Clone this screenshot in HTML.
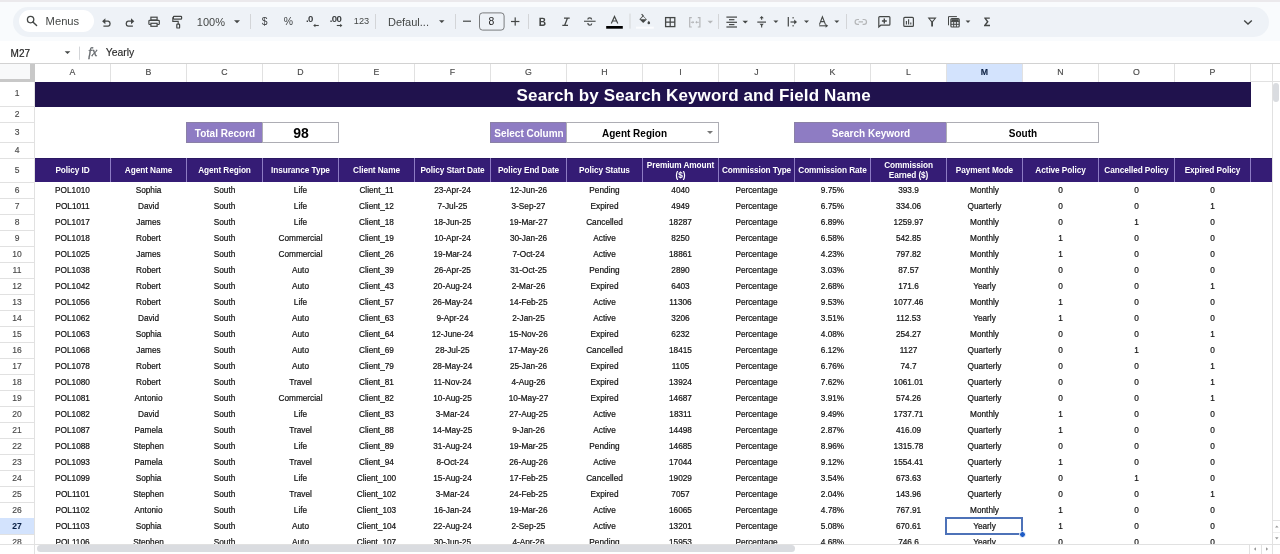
<!DOCTYPE html><html><head><meta charset="utf-8"><style>
*{margin:0;padding:0;box-sizing:border-box}
html,body{width:1280px;height:554px;overflow:hidden;background:#fff}
body{position:relative;will-change:transform;font-family:"Liberation Sans",sans-serif;color:#000}
.a{position:absolute}
.t{position:absolute;white-space:nowrap;text-align:center}
.d{position:absolute;white-space:nowrap;text-align:center;font-size:8.25px;color:#111;-webkit-text-stroke:0.2px #111;height:15px;line-height:15px;width:75px}
.rh{position:absolute;left:0;width:34px;text-align:center;font-size:8.5px;color:#4a4a4a;-webkit-text-stroke:0.15px #4a4a4a;white-space:nowrap}
.ch{position:absolute;top:64px;height:17px;line-height:17px;width:75px;text-align:center;font-size:8.75px;color:#4a4a4a;-webkit-text-stroke:0.15px #4a4a4a}
.hl{position:absolute;background:#e1e1e1}
.ic{position:absolute}
</style></head><body>
<div class="a" style="left:0;top:0;width:1280px;height:63px;background:#f9fbfd"></div>
<div class="a" style="left:0;top:0;width:1280px;height:2px;background:#ebe9ec"></div>
<div class="a" style="left:13px;top:7px;width:1256px;height:30px;border-radius:15px;background:#eef2f7"></div>
<div class="a" style="left:19px;top:10px;width:75px;height:22px;border-radius:11px;background:#fff"></div>
<div class="a" style="left:0;top:41px;width:1280px;height:22px;background:#fff"></div>
<div class="a" style="left:0;top:63px;width:1280px;height:1px;background:#d2d2d2"></div>
<svg class="a" style="left:0;top:0" width="1280" height="63" viewBox="0 0 1280 63"><circle cx="30.6" cy="19.6" r="3.2" fill="none" stroke="#444746" stroke-width="1.3"/><path d="M32.9 21.9L36.6 25.6" stroke="#444746" stroke-width="1.4" stroke-linecap="round"/><path d="M104.3 21.2H108.2A2.6 2.6 0 0 1 108.2 26.2H103.4" fill="none" stroke="#444746" stroke-width="1.3"/><path d="M102.1 21.2L105.4 18.2V24.2Z" fill="#444746"/><path d="M132.0 21.2H128.1A2.6 2.6 0 0 0 128.1 26.2H132.9" fill="none" stroke="#444746" stroke-width="1.3"/><path d="M134.3 21.2L131.0 18.2V24.2Z" fill="#444746"/><rect x="150.9" y="17.2" width="6.2" height="2.8" fill="none" stroke="#444746" stroke-width="1.2"/><rect x="148.9" y="20.3" width="10.4" height="4.2" rx="0.8" fill="none" stroke="#444746" stroke-width="1.2"/><rect x="150.9" y="23.3" width="6.2" height="3.0" fill="#eef2f7" stroke="#444746" stroke-width="1.2"/><rect x="173.4" y="16.4" width="8.2" height="2.8" rx="0.7" fill="none" stroke="#444746" stroke-width="1.2"/><path d="M173.4 17.8H172.8V21.4H178.2V24.2" fill="none" stroke="#444746" stroke-width="1.1"/><rect x="176.8" y="24.2" width="2.8" height="3.8" rx="0.6" fill="none" stroke="#444746" stroke-width="1.2"/><path d="M234 20.3L240 20.3L237.0 23.3Z" fill="#444746"/><rect x="250" y="14" width="1" height="15" fill="#d3d5d8"/><rect x="375" y="14" width="1" height="15" fill="#d3d5d8"/><path d="M439 20.3L444.5 20.3L441.75 23.05Z" fill="#444746"/><rect x="455" y="14" width="1" height="15" fill="#d3d5d8"/><rect x="463" y="20.6" width="8" height="1.2" fill="#444746"/><rect x="479.5" y="12.9" width="24.6" height="17.2" rx="3" fill="none" stroke="#7a7c7e" stroke-width="1"/><rect x="511" y="20.9" width="8.4" height="1.2" fill="#444746"/><rect x="514.6" y="17.4" width="1.2" height="8.2" fill="#444746"/><rect x="528" y="14" width="1" height="15" fill="#d3d5d8"/><path d="M539.4 17.8H542.9C544.5 17.8 545.2 18.7 545.2 19.8C545.2 20.8 544.6 21.4 543.9 21.6C544.9 21.8 545.6 22.6 545.6 23.7C545.6 25 544.7 25.9 543.1 25.9H539.4Z M541.0 19.1V21.0H542.7C543.3 21.0 543.7 20.6 543.7 20.05C543.7 19.5 543.3 19.1 542.7 19.1Z M541.0 22.3V24.6H542.9C543.6 24.6 544.0 24.1 544.0 23.45C544.0 22.8 543.6 22.3 542.9 22.3Z" fill="#444746" fill-rule="evenodd"/><path d="M564 18.2H569.7M562.3 25.4H568M567.4 18.2L564.6 25.4" stroke="#444746" stroke-width="1.3" fill="none"/><rect x="584" y="20.7" width="11.6" height="1.1" fill="#444746"/><path d="M591.6 19.5C591.6 18.4 590.7 17.8 589.7 17.8C588.6 17.8 587.8 18.5 587.8 19.4" fill="none" stroke="#444746" stroke-width="1.2"/><path d="M587.9 23.0C587.9 24.3 588.8 25.2 589.8 25.2C590.9 25.2 591.7 24.5 591.7 23.4" fill="none" stroke="#444746" stroke-width="1.2"/><path d="M611.3 23.4L614.5 16.5L617.8 23.4M612.5 21.0H616.5" fill="none" stroke="#444746" stroke-width="1.2"/><rect x="606.2" y="26" width="16.6" height="2.7" fill="#000"/><rect x="629.5" y="13.6" width="1" height="15.000000000000002" fill="#d3d5d8"/><path d="M641.6 14.2L643.4 16.0" stroke="#444746" stroke-width="1.1"/><path d="M643.0 15.6L646.8 19.4L643.2 23.0L639.4 19.2Z" fill="#444746"/><path d="M640.4 19.2L646.0 19.2L643.2 16.6Z" fill="#eef2f7"/><path d="M648.8 20.8C649.6 21.8 650.1 22.5 650.1 23.0A1.3 1.3 0 0 1 647.5 23.0C647.5 22.5 648.0 21.8 648.8 20.8Z" fill="#444746"/><rect x="636" y="26.7" width="17.8" height="2" fill="#fbfcfe"/><rect x="665.6" y="17.6" width="9.2" height="9" fill="none" stroke="#444746" stroke-width="1.3"/><path d="M670.2 17.6V26.6M665.6 22.1H674.8" stroke="#444746" stroke-width="1.2"/><path d="M691.8 17.6H689.7V27.0H691.8M697.8 17.6H699.9V27.0H697.8" fill="none" stroke="#b4b6b8" stroke-width="1.2"/><path d="M690.8 22.3H693.8M698.8 22.3H695.8" stroke="#b4b6b8" stroke-width="1"/><path d="M694.2 22.3L692.6 20.8V23.8Z M695.4 22.3L697.0 20.8V23.8Z" fill="#b4b6b8"/><path d="M707.5 20.7L713 20.7L710.25 23.45Z" fill="#b4b6b8"/><rect x="718" y="14" width="1" height="15" fill="#d3d5d8"/><rect x="726.4" y="16.5" width="10.600000000000023" height="1.2" fill="#444746"/><rect x="729" y="19.099999999999998" width="5.399999999999977" height="1.2" fill="#444746"/><rect x="726.4" y="21.7" width="10.600000000000023" height="1.2" fill="#444746"/><rect x="729" y="24.0" width="5.399999999999977" height="1.2" fill="#444746"/><rect x="726.4" y="26.4" width="10.600000000000023" height="1.2" fill="#444746"/><path d="M742.5 20.7L748 20.7L745.25 23.45Z" fill="#444746"/><rect x="757.3" y="21.5" width="8.7" height="1.2" fill="#444746"/><path d="M761.65 16.0L763.8 18.3H759.5Z M761.65 26.0L763.8 23.8H759.5Z" fill="#444746"/><path d="M761.65 17.5V19.8M761.65 24.3V27.6" stroke="#444746" stroke-width="1.1"/><path d="M773.4 20.5L778.4 20.5L775.9 23.0Z" fill="#444746"/><rect x="787.7" y="17" width="1.2" height="9.5" fill="#444746"/><path d="M790.5 22.0H795" stroke="#444746" stroke-width="1.2"/><path d="M797 22.0L794.2 19.6V24.4Z" fill="#444746"/><path d="M793.1 17V18.6M793.1 25V26.6" stroke="#444746" stroke-width="1.1"/><path d="M804 20.5L809 20.5L806.5 23.0Z" fill="#444746"/><path d="M819.4 24.6L822.4 16.8L825.5 24.6M820.6 21.6H824.4" fill="none" stroke="#444746" stroke-width="1.1"/><path d="M819.2 25.8H826.2" stroke="#444746" stroke-width="1.1"/><path d="M828.2 25.8L825.6 23.9V27.7Z" fill="#444746"/><path d="M834.3 20.5L839.3 20.5L836.8 23.0Z" fill="#444746"/><rect x="846" y="14" width="1" height="15" fill="#d3d5d8"/><path d="M859.0 19.5H857.5A2.4 2.4 0 0 0 857.5 24.3H859.0M862.6 19.5H864.1A2.4 2.4 0 0 1 864.1 24.3H862.6M858.6 21.9H863.0" fill="none" stroke="#b4b6b8" stroke-width="1.2"/><path d="M878.8 27.0V17.6A0.9 0.9 0 0 1 879.7 16.7H889.0A0.9 0.9 0 0 1 889.9 17.6V24.3A0.9 0.9 0 0 1 889.0 25.2H880.8Z" fill="none" stroke="#444746" stroke-width="1.2"/><path d="M884.3 18.5V23.4M881.9 20.95H886.8" stroke="#444746" stroke-width="1.4"/><rect x="903.8" y="17.3" width="9.6" height="9.1" rx="1" fill="none" stroke="#444746" stroke-width="1.2"/><path d="M906.4 21.0V24.6M908.6 19.3V24.6M910.8 22.6V24.6" stroke="#444746" stroke-width="1.1"/><path d="M927.6 17.5H936.6L933.0 21.9V26.5H931.2V21.9Z" fill="#444746"/><path d="M929.8 18.7H934.4L932.1 21.3Z" fill="#eef2f7"/><path d="M948.5 25.3V16.6H956.9" fill="none" stroke="#444746" stroke-width="1"/><rect x="950.9" y="18.6" width="8.3" height="8.4" rx="1" fill="none" stroke="#444746" stroke-width="1.2"/><path d="M950.9 21.6H959.2M950.9 24.3H959.2M953.7 21.6V27M956.4 21.6V27" stroke="#444746" stroke-width="1"/><rect x="951.5" y="19.2" width="7.1" height="2.4" fill="#444746"/><path d="M965.6 20.6L970.4 20.6L968.0 22.99999999999998Z" fill="#444746"/><path d="M984.2 17.4H989.8V18.7H986.3L988.6 21.7L986.3 24.8H990.0V26.2H984.0V25.2L986.8 21.7L984.2 18.3Z" fill="#444746"/><path d="M1244.2 20.4L1248.0 24.0L1251.8 20.4" fill="none" stroke="#444746" stroke-width="1.4"/><path d="M64.7 51.2L70.3 51.2L67.5 54.0Z" fill="#444746"/><rect x="79" y="46.6" width="1" height="13.199999999999996" fill="#d3d5d8"/></svg>
<div style="position:absolute;white-space:nowrap;font-family:'Liberation Sans',sans-serif;color:#444746;left:45.6px;top:10.92px;height:20px;line-height:20px;font-size:11.2px;">Menus</div>
<div style="position:absolute;white-space:nowrap;font-family:'Liberation Sans',sans-serif;color:#444746;left:196.8px;top:11.79px;height:20px;line-height:20px;font-size:11px;">100%</div>
<div style="position:absolute;white-space:nowrap;font-family:'Liberation Sans',sans-serif;color:#444746;left:261.8px;top:11.60px;height:20px;line-height:20px;font-size:10.4px;color:#3c3f41">$</div>
<div style="position:absolute;white-space:nowrap;font-family:'Liberation Sans',sans-serif;color:#444746;left:283.8px;top:11.60px;height:20px;line-height:20px;font-size:10.4px;color:#3c3f41">%</div>
<div style="position:absolute;white-space:nowrap;font-family:'Liberation Sans',sans-serif;color:#444746;left:306.0px;top:8.87px;height:20px;line-height:20px;font-size:9.6px;font-weight:bold;letter-spacing:-0.6px;color:#3c3f41">.0</div>
<div style="position:absolute;white-space:nowrap;font-family:'Liberation Sans',sans-serif;color:#444746;left:329.8px;top:8.87px;height:20px;line-height:20px;font-size:9.6px;font-weight:bold;letter-spacing:-0.6px;color:#3c3f41">.00</div>
<div style="position:absolute;white-space:nowrap;font-family:'Liberation Sans',sans-serif;color:#444746;left:353.8px;top:10.81px;height:20px;line-height:20px;font-size:9.2px;">123</div>
<div style="position:absolute;white-space:nowrap;font-family:'Liberation Sans',sans-serif;color:#444746;left:388px;top:11.59px;height:20px;line-height:20px;font-size:11px;">Defaul...</div>
<div style="position:absolute;white-space:nowrap;font-family:'Liberation Sans',sans-serif;color:#444746;left:488.6px;top:11.80px;height:20px;line-height:20px;font-size:10.4px;color:#1f1f1f">8</div>
<svg class="a" style="left:0;top:0" width="1280" height="40" viewBox="0 0 1280 40"><path d="M314.6 25.5H318.8" stroke="#444746" stroke-width="1.1"/><path d="M313.2 25.5L315.4 23.8V27.2Z" fill="#444746"/><path d="M336.8 25.5H341" stroke="#444746" stroke-width="1.1"/><path d="M342.4 25.5L340.2 23.8V27.2Z" fill="#444746"/></svg>
<div style="position:absolute;white-space:nowrap;font-family:'Liberation Sans',sans-serif;color:#444746;left:10.6px;top:43.54px;height:20px;line-height:20px;font-size:10px;color:#1f1f1f;-webkit-text-stroke:0.2px #1f1f1f">M27</div>
<div style="position:absolute;white-space:nowrap;font-family:'Liberation Sans',sans-serif;color:#444746;left:88.2px;top:41.87px;height:20px;line-height:20px;font-size:12.5px;font-family:'Liberation Serif',serif;color:#666a6e;letter-spacing:0.2px;-webkit-text-stroke:0.35px #666a6e"><i>fx</i></div>
<div style="position:absolute;white-space:nowrap;font-family:'Liberation Sans',sans-serif;color:#444746;left:105.8px;top:43.00px;height:20px;line-height:20px;font-size:10.4px;color:#2a2a2a;-webkit-text-stroke:0.15px #2a2a2a">Yearly</div>
<div class="ch" style="left:35px">A</div>
<div class="ch" style="left:111px">B</div>
<div class="ch" style="left:187px">C</div>
<div class="ch" style="left:263px">D</div>
<div class="ch" style="left:339px">E</div>
<div class="ch" style="left:415px">F</div>
<div class="ch" style="left:491px">G</div>
<div class="ch" style="left:567px">H</div>
<div class="ch" style="left:643px">I</div>
<div class="ch" style="left:719px">J</div>
<div class="ch" style="left:795px">K</div>
<div class="ch" style="left:871px">L</div>
<div class="a" style="left:947px;top:64px;width:75px;height:18px;background:#d3e3fd"></div>
<div class="ch" style="left:947px;font-weight:bold;color:#041e49">M</div>
<div class="ch" style="left:1023px">N</div>
<div class="ch" style="left:1099px">O</div>
<div class="ch" style="left:1175px">P</div>
<div class="hl" style="left:34px;top:64px;width:1px;height:18px"></div>
<div class="hl" style="left:110px;top:64px;width:1px;height:18px"></div>
<div class="hl" style="left:186px;top:64px;width:1px;height:18px"></div>
<div class="hl" style="left:262px;top:64px;width:1px;height:18px"></div>
<div class="hl" style="left:338px;top:64px;width:1px;height:18px"></div>
<div class="hl" style="left:414px;top:64px;width:1px;height:18px"></div>
<div class="hl" style="left:490px;top:64px;width:1px;height:18px"></div>
<div class="hl" style="left:566px;top:64px;width:1px;height:18px"></div>
<div class="hl" style="left:642px;top:64px;width:1px;height:18px"></div>
<div class="hl" style="left:718px;top:64px;width:1px;height:18px"></div>
<div class="hl" style="left:794px;top:64px;width:1px;height:18px"></div>
<div class="hl" style="left:870px;top:64px;width:1px;height:18px"></div>
<div class="hl" style="left:946px;top:64px;width:1px;height:18px"></div>
<div class="hl" style="left:1022px;top:64px;width:1px;height:18px"></div>
<div class="hl" style="left:1098px;top:64px;width:1px;height:18px"></div>
<div class="hl" style="left:1174px;top:64px;width:1px;height:18px"></div>
<div class="hl" style="left:1250px;top:64px;width:1px;height:18px"></div>
<div class="hl" style="left:1272px;top:64px;width:1px;height:490px"></div>
<div class="a" style="left:0;top:64px;width:34px;height:18px;background:#f8f9fa"></div>
<div class="a" style="left:30px;top:64px;width:5px;height:18px;background:#c8c8c8"></div>
<div class="a" style="left:0;top:79px;width:34px;height:3px;background:#c8c8c8"></div>
<div class="hl" style="left:34px;top:82px;width:1px;height:472px"></div>
<div class="rh" style="top:81px;height:24px;line-height:24px">1</div>
<div class="hl" style="left:0;top:106px;width:34px;height:1px"></div>
<div class="rh" style="top:107px;height:15px;line-height:15px">2</div>
<div class="hl" style="left:0;top:122px;width:34px;height:1px"></div>
<div class="rh" style="top:123px;height:19px;line-height:19px">3</div>
<div class="hl" style="left:0;top:142px;width:34px;height:1px"></div>
<div class="rh" style="top:143px;height:15px;line-height:15px">4</div>
<div class="hl" style="left:0;top:158px;width:34px;height:1px"></div>
<div class="rh" style="top:159px;height:23px;line-height:23px">5</div>
<div class="hl" style="left:0;top:182px;width:34px;height:1px"></div>
<div class="rh" style="top:183px;height:15px;line-height:15px">6</div>
<div class="hl" style="left:0;top:198px;width:34px;height:1px"></div>
<div class="rh" style="top:199px;height:15px;line-height:15px">7</div>
<div class="hl" style="left:0;top:214px;width:34px;height:1px"></div>
<div class="rh" style="top:215px;height:15px;line-height:15px">8</div>
<div class="hl" style="left:0;top:230px;width:34px;height:1px"></div>
<div class="rh" style="top:231px;height:15px;line-height:15px">9</div>
<div class="hl" style="left:0;top:246px;width:34px;height:1px"></div>
<div class="rh" style="top:247px;height:15px;line-height:15px">10</div>
<div class="hl" style="left:0;top:262px;width:34px;height:1px"></div>
<div class="rh" style="top:263px;height:15px;line-height:15px">11</div>
<div class="hl" style="left:0;top:278px;width:34px;height:1px"></div>
<div class="rh" style="top:279px;height:15px;line-height:15px">12</div>
<div class="hl" style="left:0;top:294px;width:34px;height:1px"></div>
<div class="rh" style="top:295px;height:15px;line-height:15px">13</div>
<div class="hl" style="left:0;top:310px;width:34px;height:1px"></div>
<div class="rh" style="top:311px;height:15px;line-height:15px">14</div>
<div class="hl" style="left:0;top:326px;width:34px;height:1px"></div>
<div class="rh" style="top:327px;height:15px;line-height:15px">15</div>
<div class="hl" style="left:0;top:342px;width:34px;height:1px"></div>
<div class="rh" style="top:343px;height:15px;line-height:15px">16</div>
<div class="hl" style="left:0;top:358px;width:34px;height:1px"></div>
<div class="rh" style="top:359px;height:15px;line-height:15px">17</div>
<div class="hl" style="left:0;top:374px;width:34px;height:1px"></div>
<div class="rh" style="top:375px;height:15px;line-height:15px">18</div>
<div class="hl" style="left:0;top:390px;width:34px;height:1px"></div>
<div class="rh" style="top:391px;height:15px;line-height:15px">19</div>
<div class="hl" style="left:0;top:406px;width:34px;height:1px"></div>
<div class="rh" style="top:407px;height:15px;line-height:15px">20</div>
<div class="hl" style="left:0;top:422px;width:34px;height:1px"></div>
<div class="rh" style="top:423px;height:15px;line-height:15px">21</div>
<div class="hl" style="left:0;top:438px;width:34px;height:1px"></div>
<div class="rh" style="top:439px;height:15px;line-height:15px">22</div>
<div class="hl" style="left:0;top:454px;width:34px;height:1px"></div>
<div class="rh" style="top:455px;height:15px;line-height:15px">23</div>
<div class="hl" style="left:0;top:470px;width:34px;height:1px"></div>
<div class="rh" style="top:471px;height:15px;line-height:15px">24</div>
<div class="hl" style="left:0;top:486px;width:34px;height:1px"></div>
<div class="rh" style="top:487px;height:15px;line-height:15px">25</div>
<div class="hl" style="left:0;top:502px;width:34px;height:1px"></div>
<div class="rh" style="top:503px;height:15px;line-height:15px">26</div>
<div class="hl" style="left:0;top:518px;width:34px;height:1px"></div>
<div class="a" style="left:0;top:518px;width:34px;height:17px;background:#d3e3fd"></div>
<div class="rh" style="top:519px;height:15px;line-height:15px;font-weight:bold;color:#041e49">27</div>
<div class="hl" style="left:0;top:534px;width:34px;height:1px"></div>
<div class="rh" style="top:535px;height:15px;line-height:15px">28</div>
<div class="hl" style="left:0;top:550px;width:34px;height:1px"></div>
<div class="a" style="left:35px;top:82px;width:1216px;height:25px;background:#20124d"></div>
<div class="t" style="left:516.6px;top:82.8px;height:25px;line-height:25px;font-size:17px;letter-spacing:0.12px;font-weight:bold;color:#fff;text-align:left">Search by Search Keyword and Field Name</div>
<div class="a" style="left:186px;top:122px;width:77px;height:21px;background:#8e7cc3;border:1px solid #8a80a6;border-right:none"></div>
<div class="t" style="left:187px;top:123.2px;width:76px;height:21px;line-height:21px;font-size:10px;font-weight:bold;color:#fff">Total Record</div>
<div class="a" style="left:262px;top:122px;width:77px;height:21px;border:1px solid #adadb4;background:#fff"></div>
<div class="t" style="left:263px;top:122.5px;width:76px;height:21px;line-height:21px;font-size:14px;font-weight:bold;color:#000">98</div>
<div class="a" style="left:490px;top:122px;width:77px;height:21px;background:#8e7cc3;border:1px solid #8a80a6;border-right:none"></div>
<div class="t" style="left:491px;top:123.2px;width:76px;height:21px;line-height:21px;font-size:10px;font-weight:bold;color:#fff">Select Column</div>
<div class="a" style="left:566px;top:122px;width:153px;height:21px;border:1px solid #adadb4;background:#fff"></div>
<div class="t" style="left:566px;top:122.5px;width:137px;height:21px;line-height:21px;font-size:10px;font-weight:bold;color:#000">Agent Region</div>
<div class="a" style="left:707px;top:131px;width:0;height:0;border-left:3px solid transparent;border-right:3px solid transparent;border-top:3px solid #777"></div>
<div class="a" style="left:794px;top:122px;width:153px;height:21px;background:#8e7cc3;border:1px solid #8a80a6;border-right:none"></div>
<div class="t" style="left:795px;top:123.2px;width:152px;height:21px;line-height:21px;font-size:10px;font-weight:bold;color:#fff">Search Keyword</div>
<div class="a" style="left:946px;top:122px;width:153px;height:21px;border:1px solid #adadb4;background:#fff"></div>
<div class="t" style="left:947px;top:122.5px;width:152px;height:21px;line-height:21px;font-size:10px;font-weight:bold;color:#000">South</div>
<div class="a" style="left:35px;top:158px;width:1237px;height:24px;background:#351c75;border-top:1px solid #2a1862"></div>
<div class="a" style="left:110px;top:158px;width:1px;height:24px;background:#8e7cc3"></div>
<div class="a" style="left:186px;top:158px;width:1px;height:24px;background:#8e7cc3"></div>
<div class="a" style="left:262px;top:158px;width:1px;height:24px;background:#8e7cc3"></div>
<div class="a" style="left:338px;top:158px;width:1px;height:24px;background:#8e7cc3"></div>
<div class="a" style="left:414px;top:158px;width:1px;height:24px;background:#8e7cc3"></div>
<div class="a" style="left:490px;top:158px;width:1px;height:24px;background:#8e7cc3"></div>
<div class="a" style="left:566px;top:158px;width:1px;height:24px;background:#8e7cc3"></div>
<div class="a" style="left:642px;top:158px;width:1px;height:24px;background:#8e7cc3"></div>
<div class="a" style="left:718px;top:158px;width:1px;height:24px;background:#8e7cc3"></div>
<div class="a" style="left:794px;top:158px;width:1px;height:24px;background:#8e7cc3"></div>
<div class="a" style="left:870px;top:158px;width:1px;height:24px;background:#8e7cc3"></div>
<div class="a" style="left:946px;top:158px;width:1px;height:24px;background:#8e7cc3"></div>
<div class="a" style="left:1022px;top:158px;width:1px;height:24px;background:#8e7cc3"></div>
<div class="a" style="left:1098px;top:158px;width:1px;height:24px;background:#8e7cc3"></div>
<div class="a" style="left:1174px;top:158px;width:1px;height:24px;background:#8e7cc3"></div>
<div class="a" style="left:1250px;top:158px;width:1px;height:24px;background:#8e7cc3"></div>
<div class="t" style="left:35px;top:158.5px;width:75px;height:23px;line-height:23px;font-size:8.25px;letter-spacing:-0.08px;font-weight:bold;color:#fff">Policy ID</div>
<div class="t" style="left:111px;top:158.5px;width:75px;height:23px;line-height:23px;font-size:8.25px;letter-spacing:-0.08px;font-weight:bold;color:#fff">Agent Name</div>
<div class="t" style="left:187px;top:158.5px;width:75px;height:23px;line-height:23px;font-size:8.25px;letter-spacing:-0.08px;font-weight:bold;color:#fff">Agent Region</div>
<div class="t" style="left:263px;top:158.5px;width:75px;height:23px;line-height:23px;font-size:8.25px;letter-spacing:-0.08px;font-weight:bold;color:#fff">Insurance Type</div>
<div class="t" style="left:339px;top:158.5px;width:75px;height:23px;line-height:23px;font-size:8.25px;letter-spacing:-0.08px;font-weight:bold;color:#fff">Client Name</div>
<div class="t" style="left:415px;top:158.5px;width:75px;height:23px;line-height:23px;font-size:8.25px;letter-spacing:-0.08px;font-weight:bold;color:#fff">Policy Start Date</div>
<div class="t" style="left:491px;top:158.5px;width:75px;height:23px;line-height:23px;font-size:8.25px;letter-spacing:-0.08px;font-weight:bold;color:#fff">Policy End Date</div>
<div class="t" style="left:567px;top:158.5px;width:75px;height:23px;line-height:23px;font-size:8.25px;letter-spacing:-0.08px;font-weight:bold;color:#fff">Policy Status</div>
<div class="t" style="left:643px;top:161px;width:75px;height:20px;line-height:9.5px;font-size:8.25px;letter-spacing:-0.08px;font-weight:bold;color:#fff;white-space:normal">Premium Amount<br>($)</div>
<div class="t" style="left:719px;top:158.5px;width:75px;height:23px;line-height:23px;font-size:8.25px;letter-spacing:-0.08px;font-weight:bold;color:#fff">Commission Type</div>
<div class="t" style="left:795px;top:158.5px;width:75px;height:23px;line-height:23px;font-size:8.25px;letter-spacing:-0.08px;font-weight:bold;color:#fff">Commission Rate</div>
<div class="t" style="left:871px;top:161px;width:75px;height:20px;line-height:9.5px;font-size:8.25px;letter-spacing:-0.08px;font-weight:bold;color:#fff;white-space:normal">Commission<br>Earned ($)</div>
<div class="t" style="left:947px;top:158.5px;width:75px;height:23px;line-height:23px;font-size:8.25px;letter-spacing:-0.08px;font-weight:bold;color:#fff">Payment Mode</div>
<div class="t" style="left:1023px;top:158.5px;width:75px;height:23px;line-height:23px;font-size:8.25px;letter-spacing:-0.08px;font-weight:bold;color:#fff">Active Policy</div>
<div class="t" style="left:1099px;top:158.5px;width:75px;height:23px;line-height:23px;font-size:8.25px;letter-spacing:-0.08px;font-weight:bold;color:#fff">Cancelled Policy</div>
<div class="t" style="left:1175px;top:158.5px;width:75px;height:23px;line-height:23px;font-size:8.25px;letter-spacing:-0.08px;font-weight:bold;color:#fff">Expired Policy</div>
<div class="d" style="left:35px;top:183px">POL1010</div>
<div class="d" style="left:111px;top:183px">Sophia</div>
<div class="d" style="left:187px;top:183px">South</div>
<div class="d" style="left:263px;top:183px">Life</div>
<div class="d" style="left:339px;top:183px">Client_11</div>
<div class="d" style="left:415px;top:183px">23-Apr-24</div>
<div class="d" style="left:491px;top:183px">12-Jun-26</div>
<div class="d" style="left:567px;top:183px">Pending</div>
<div class="d" style="left:643px;top:183px">4040</div>
<div class="d" style="left:719px;top:183px">Percentage</div>
<div class="d" style="left:795px;top:183px">9.75%</div>
<div class="d" style="left:871px;top:183px">393.9</div>
<div class="d" style="left:947px;top:183px">Monthly</div>
<div class="d" style="left:1023px;top:183px">0</div>
<div class="d" style="left:1099px;top:183px">0</div>
<div class="d" style="left:1175px;top:183px">0</div>
<div class="d" style="left:35px;top:199px">POL1011</div>
<div class="d" style="left:111px;top:199px">David</div>
<div class="d" style="left:187px;top:199px">South</div>
<div class="d" style="left:263px;top:199px">Life</div>
<div class="d" style="left:339px;top:199px">Client_12</div>
<div class="d" style="left:415px;top:199px">7-Jul-25</div>
<div class="d" style="left:491px;top:199px">3-Sep-27</div>
<div class="d" style="left:567px;top:199px">Expired</div>
<div class="d" style="left:643px;top:199px">4949</div>
<div class="d" style="left:719px;top:199px">Percentage</div>
<div class="d" style="left:795px;top:199px">6.75%</div>
<div class="d" style="left:871px;top:199px">334.06</div>
<div class="d" style="left:947px;top:199px">Quarterly</div>
<div class="d" style="left:1023px;top:199px">0</div>
<div class="d" style="left:1099px;top:199px">0</div>
<div class="d" style="left:1175px;top:199px">1</div>
<div class="d" style="left:35px;top:215px">POL1017</div>
<div class="d" style="left:111px;top:215px">James</div>
<div class="d" style="left:187px;top:215px">South</div>
<div class="d" style="left:263px;top:215px">Life</div>
<div class="d" style="left:339px;top:215px">Client_18</div>
<div class="d" style="left:415px;top:215px">18-Jun-25</div>
<div class="d" style="left:491px;top:215px">19-Mar-27</div>
<div class="d" style="left:567px;top:215px">Cancelled</div>
<div class="d" style="left:643px;top:215px">18287</div>
<div class="d" style="left:719px;top:215px">Percentage</div>
<div class="d" style="left:795px;top:215px">6.89%</div>
<div class="d" style="left:871px;top:215px">1259.97</div>
<div class="d" style="left:947px;top:215px">Monthly</div>
<div class="d" style="left:1023px;top:215px">0</div>
<div class="d" style="left:1099px;top:215px">1</div>
<div class="d" style="left:1175px;top:215px">0</div>
<div class="d" style="left:35px;top:231px">POL1018</div>
<div class="d" style="left:111px;top:231px">Robert</div>
<div class="d" style="left:187px;top:231px">South</div>
<div class="d" style="left:263px;top:231px">Commercial</div>
<div class="d" style="left:339px;top:231px">Client_19</div>
<div class="d" style="left:415px;top:231px">10-Apr-24</div>
<div class="d" style="left:491px;top:231px">30-Jan-26</div>
<div class="d" style="left:567px;top:231px">Active</div>
<div class="d" style="left:643px;top:231px">8250</div>
<div class="d" style="left:719px;top:231px">Percentage</div>
<div class="d" style="left:795px;top:231px">6.58%</div>
<div class="d" style="left:871px;top:231px">542.85</div>
<div class="d" style="left:947px;top:231px">Monthly</div>
<div class="d" style="left:1023px;top:231px">1</div>
<div class="d" style="left:1099px;top:231px">0</div>
<div class="d" style="left:1175px;top:231px">0</div>
<div class="d" style="left:35px;top:247px">POL1025</div>
<div class="d" style="left:111px;top:247px">James</div>
<div class="d" style="left:187px;top:247px">South</div>
<div class="d" style="left:263px;top:247px">Commercial</div>
<div class="d" style="left:339px;top:247px">Client_26</div>
<div class="d" style="left:415px;top:247px">19-Mar-24</div>
<div class="d" style="left:491px;top:247px">7-Oct-24</div>
<div class="d" style="left:567px;top:247px">Active</div>
<div class="d" style="left:643px;top:247px">18861</div>
<div class="d" style="left:719px;top:247px">Percentage</div>
<div class="d" style="left:795px;top:247px">4.23%</div>
<div class="d" style="left:871px;top:247px">797.82</div>
<div class="d" style="left:947px;top:247px">Monthly</div>
<div class="d" style="left:1023px;top:247px">1</div>
<div class="d" style="left:1099px;top:247px">0</div>
<div class="d" style="left:1175px;top:247px">0</div>
<div class="d" style="left:35px;top:263px">POL1038</div>
<div class="d" style="left:111px;top:263px">Robert</div>
<div class="d" style="left:187px;top:263px">South</div>
<div class="d" style="left:263px;top:263px">Auto</div>
<div class="d" style="left:339px;top:263px">Client_39</div>
<div class="d" style="left:415px;top:263px">26-Apr-25</div>
<div class="d" style="left:491px;top:263px">31-Oct-25</div>
<div class="d" style="left:567px;top:263px">Pending</div>
<div class="d" style="left:643px;top:263px">2890</div>
<div class="d" style="left:719px;top:263px">Percentage</div>
<div class="d" style="left:795px;top:263px">3.03%</div>
<div class="d" style="left:871px;top:263px">87.57</div>
<div class="d" style="left:947px;top:263px">Monthly</div>
<div class="d" style="left:1023px;top:263px">0</div>
<div class="d" style="left:1099px;top:263px">0</div>
<div class="d" style="left:1175px;top:263px">0</div>
<div class="d" style="left:35px;top:279px">POL1042</div>
<div class="d" style="left:111px;top:279px">Robert</div>
<div class="d" style="left:187px;top:279px">South</div>
<div class="d" style="left:263px;top:279px">Auto</div>
<div class="d" style="left:339px;top:279px">Client_43</div>
<div class="d" style="left:415px;top:279px">20-Aug-24</div>
<div class="d" style="left:491px;top:279px">2-Mar-26</div>
<div class="d" style="left:567px;top:279px">Expired</div>
<div class="d" style="left:643px;top:279px">6403</div>
<div class="d" style="left:719px;top:279px">Percentage</div>
<div class="d" style="left:795px;top:279px">2.68%</div>
<div class="d" style="left:871px;top:279px">171.6</div>
<div class="d" style="left:947px;top:279px">Yearly</div>
<div class="d" style="left:1023px;top:279px">0</div>
<div class="d" style="left:1099px;top:279px">0</div>
<div class="d" style="left:1175px;top:279px">1</div>
<div class="d" style="left:35px;top:295px">POL1056</div>
<div class="d" style="left:111px;top:295px">Robert</div>
<div class="d" style="left:187px;top:295px">South</div>
<div class="d" style="left:263px;top:295px">Life</div>
<div class="d" style="left:339px;top:295px">Client_57</div>
<div class="d" style="left:415px;top:295px">26-May-24</div>
<div class="d" style="left:491px;top:295px">14-Feb-25</div>
<div class="d" style="left:567px;top:295px">Active</div>
<div class="d" style="left:643px;top:295px">11306</div>
<div class="d" style="left:719px;top:295px">Percentage</div>
<div class="d" style="left:795px;top:295px">9.53%</div>
<div class="d" style="left:871px;top:295px">1077.46</div>
<div class="d" style="left:947px;top:295px">Monthly</div>
<div class="d" style="left:1023px;top:295px">1</div>
<div class="d" style="left:1099px;top:295px">0</div>
<div class="d" style="left:1175px;top:295px">0</div>
<div class="d" style="left:35px;top:311px">POL1062</div>
<div class="d" style="left:111px;top:311px">David</div>
<div class="d" style="left:187px;top:311px">South</div>
<div class="d" style="left:263px;top:311px">Auto</div>
<div class="d" style="left:339px;top:311px">Client_63</div>
<div class="d" style="left:415px;top:311px">9-Apr-24</div>
<div class="d" style="left:491px;top:311px">2-Jan-25</div>
<div class="d" style="left:567px;top:311px">Active</div>
<div class="d" style="left:643px;top:311px">3206</div>
<div class="d" style="left:719px;top:311px">Percentage</div>
<div class="d" style="left:795px;top:311px">3.51%</div>
<div class="d" style="left:871px;top:311px">112.53</div>
<div class="d" style="left:947px;top:311px">Yearly</div>
<div class="d" style="left:1023px;top:311px">1</div>
<div class="d" style="left:1099px;top:311px">0</div>
<div class="d" style="left:1175px;top:311px">0</div>
<div class="d" style="left:35px;top:327px">POL1063</div>
<div class="d" style="left:111px;top:327px">Sophia</div>
<div class="d" style="left:187px;top:327px">South</div>
<div class="d" style="left:263px;top:327px">Auto</div>
<div class="d" style="left:339px;top:327px">Client_64</div>
<div class="d" style="left:415px;top:327px">12-June-24</div>
<div class="d" style="left:491px;top:327px">15-Nov-26</div>
<div class="d" style="left:567px;top:327px">Expired</div>
<div class="d" style="left:643px;top:327px">6232</div>
<div class="d" style="left:719px;top:327px">Percentage</div>
<div class="d" style="left:795px;top:327px">4.08%</div>
<div class="d" style="left:871px;top:327px">254.27</div>
<div class="d" style="left:947px;top:327px">Monthly</div>
<div class="d" style="left:1023px;top:327px">0</div>
<div class="d" style="left:1099px;top:327px">0</div>
<div class="d" style="left:1175px;top:327px">1</div>
<div class="d" style="left:35px;top:343px">POL1068</div>
<div class="d" style="left:111px;top:343px">James</div>
<div class="d" style="left:187px;top:343px">South</div>
<div class="d" style="left:263px;top:343px">Auto</div>
<div class="d" style="left:339px;top:343px">Client_69</div>
<div class="d" style="left:415px;top:343px">28-Jul-25</div>
<div class="d" style="left:491px;top:343px">17-May-26</div>
<div class="d" style="left:567px;top:343px">Cancelled</div>
<div class="d" style="left:643px;top:343px">18415</div>
<div class="d" style="left:719px;top:343px">Percentage</div>
<div class="d" style="left:795px;top:343px">6.12%</div>
<div class="d" style="left:871px;top:343px">1127</div>
<div class="d" style="left:947px;top:343px">Quarterly</div>
<div class="d" style="left:1023px;top:343px">0</div>
<div class="d" style="left:1099px;top:343px">1</div>
<div class="d" style="left:1175px;top:343px">0</div>
<div class="d" style="left:35px;top:359px">POL1078</div>
<div class="d" style="left:111px;top:359px">Robert</div>
<div class="d" style="left:187px;top:359px">South</div>
<div class="d" style="left:263px;top:359px">Auto</div>
<div class="d" style="left:339px;top:359px">Client_79</div>
<div class="d" style="left:415px;top:359px">28-May-24</div>
<div class="d" style="left:491px;top:359px">25-Jan-26</div>
<div class="d" style="left:567px;top:359px">Expired</div>
<div class="d" style="left:643px;top:359px">1105</div>
<div class="d" style="left:719px;top:359px">Percentage</div>
<div class="d" style="left:795px;top:359px">6.76%</div>
<div class="d" style="left:871px;top:359px">74.7</div>
<div class="d" style="left:947px;top:359px">Quarterly</div>
<div class="d" style="left:1023px;top:359px">0</div>
<div class="d" style="left:1099px;top:359px">0</div>
<div class="d" style="left:1175px;top:359px">1</div>
<div class="d" style="left:35px;top:375px">POL1080</div>
<div class="d" style="left:111px;top:375px">Robert</div>
<div class="d" style="left:187px;top:375px">South</div>
<div class="d" style="left:263px;top:375px">Travel</div>
<div class="d" style="left:339px;top:375px">Client_81</div>
<div class="d" style="left:415px;top:375px">11-Nov-24</div>
<div class="d" style="left:491px;top:375px">4-Aug-26</div>
<div class="d" style="left:567px;top:375px">Expired</div>
<div class="d" style="left:643px;top:375px">13924</div>
<div class="d" style="left:719px;top:375px">Percentage</div>
<div class="d" style="left:795px;top:375px">7.62%</div>
<div class="d" style="left:871px;top:375px">1061.01</div>
<div class="d" style="left:947px;top:375px">Quarterly</div>
<div class="d" style="left:1023px;top:375px">0</div>
<div class="d" style="left:1099px;top:375px">0</div>
<div class="d" style="left:1175px;top:375px">1</div>
<div class="d" style="left:35px;top:391px">POL1081</div>
<div class="d" style="left:111px;top:391px">Antonio</div>
<div class="d" style="left:187px;top:391px">South</div>
<div class="d" style="left:263px;top:391px">Commercial</div>
<div class="d" style="left:339px;top:391px">Client_82</div>
<div class="d" style="left:415px;top:391px">10-Aug-25</div>
<div class="d" style="left:491px;top:391px">10-May-27</div>
<div class="d" style="left:567px;top:391px">Expired</div>
<div class="d" style="left:643px;top:391px">14687</div>
<div class="d" style="left:719px;top:391px">Percentage</div>
<div class="d" style="left:795px;top:391px">3.91%</div>
<div class="d" style="left:871px;top:391px">574.26</div>
<div class="d" style="left:947px;top:391px">Quarterly</div>
<div class="d" style="left:1023px;top:391px">0</div>
<div class="d" style="left:1099px;top:391px">0</div>
<div class="d" style="left:1175px;top:391px">1</div>
<div class="d" style="left:35px;top:407px">POL1082</div>
<div class="d" style="left:111px;top:407px">David</div>
<div class="d" style="left:187px;top:407px">South</div>
<div class="d" style="left:263px;top:407px">Life</div>
<div class="d" style="left:339px;top:407px">Client_83</div>
<div class="d" style="left:415px;top:407px">3-Mar-24</div>
<div class="d" style="left:491px;top:407px">27-Aug-25</div>
<div class="d" style="left:567px;top:407px">Active</div>
<div class="d" style="left:643px;top:407px">18311</div>
<div class="d" style="left:719px;top:407px">Percentage</div>
<div class="d" style="left:795px;top:407px">9.49%</div>
<div class="d" style="left:871px;top:407px">1737.71</div>
<div class="d" style="left:947px;top:407px">Monthly</div>
<div class="d" style="left:1023px;top:407px">1</div>
<div class="d" style="left:1099px;top:407px">0</div>
<div class="d" style="left:1175px;top:407px">0</div>
<div class="d" style="left:35px;top:423px">POL1087</div>
<div class="d" style="left:111px;top:423px">Pamela</div>
<div class="d" style="left:187px;top:423px">South</div>
<div class="d" style="left:263px;top:423px">Travel</div>
<div class="d" style="left:339px;top:423px">Client_88</div>
<div class="d" style="left:415px;top:423px">14-May-25</div>
<div class="d" style="left:491px;top:423px">9-Jan-26</div>
<div class="d" style="left:567px;top:423px">Active</div>
<div class="d" style="left:643px;top:423px">14498</div>
<div class="d" style="left:719px;top:423px">Percentage</div>
<div class="d" style="left:795px;top:423px">2.87%</div>
<div class="d" style="left:871px;top:423px">416.09</div>
<div class="d" style="left:947px;top:423px">Quarterly</div>
<div class="d" style="left:1023px;top:423px">1</div>
<div class="d" style="left:1099px;top:423px">0</div>
<div class="d" style="left:1175px;top:423px">0</div>
<div class="d" style="left:35px;top:439px">POL1088</div>
<div class="d" style="left:111px;top:439px">Stephen</div>
<div class="d" style="left:187px;top:439px">South</div>
<div class="d" style="left:263px;top:439px">Life</div>
<div class="d" style="left:339px;top:439px">Client_89</div>
<div class="d" style="left:415px;top:439px">31-Aug-24</div>
<div class="d" style="left:491px;top:439px">19-Mar-25</div>
<div class="d" style="left:567px;top:439px">Pending</div>
<div class="d" style="left:643px;top:439px">14685</div>
<div class="d" style="left:719px;top:439px">Percentage</div>
<div class="d" style="left:795px;top:439px">8.96%</div>
<div class="d" style="left:871px;top:439px">1315.78</div>
<div class="d" style="left:947px;top:439px">Quarterly</div>
<div class="d" style="left:1023px;top:439px">0</div>
<div class="d" style="left:1099px;top:439px">0</div>
<div class="d" style="left:1175px;top:439px">0</div>
<div class="d" style="left:35px;top:455px">POL1093</div>
<div class="d" style="left:111px;top:455px">Pamela</div>
<div class="d" style="left:187px;top:455px">South</div>
<div class="d" style="left:263px;top:455px">Travel</div>
<div class="d" style="left:339px;top:455px">Client_94</div>
<div class="d" style="left:415px;top:455px">8-Oct-24</div>
<div class="d" style="left:491px;top:455px">26-Aug-26</div>
<div class="d" style="left:567px;top:455px">Active</div>
<div class="d" style="left:643px;top:455px">17044</div>
<div class="d" style="left:719px;top:455px">Percentage</div>
<div class="d" style="left:795px;top:455px">9.12%</div>
<div class="d" style="left:871px;top:455px">1554.41</div>
<div class="d" style="left:947px;top:455px">Quarterly</div>
<div class="d" style="left:1023px;top:455px">1</div>
<div class="d" style="left:1099px;top:455px">0</div>
<div class="d" style="left:1175px;top:455px">0</div>
<div class="d" style="left:35px;top:471px">POL1099</div>
<div class="d" style="left:111px;top:471px">Sophia</div>
<div class="d" style="left:187px;top:471px">South</div>
<div class="d" style="left:263px;top:471px">Life</div>
<div class="d" style="left:339px;top:471px">Client_100</div>
<div class="d" style="left:415px;top:471px">15-Aug-24</div>
<div class="d" style="left:491px;top:471px">17-Feb-25</div>
<div class="d" style="left:567px;top:471px">Cancelled</div>
<div class="d" style="left:643px;top:471px">19029</div>
<div class="d" style="left:719px;top:471px">Percentage</div>
<div class="d" style="left:795px;top:471px">3.54%</div>
<div class="d" style="left:871px;top:471px">673.63</div>
<div class="d" style="left:947px;top:471px">Quarterly</div>
<div class="d" style="left:1023px;top:471px">0</div>
<div class="d" style="left:1099px;top:471px">1</div>
<div class="d" style="left:1175px;top:471px">0</div>
<div class="d" style="left:35px;top:487px">POL1101</div>
<div class="d" style="left:111px;top:487px">Stephen</div>
<div class="d" style="left:187px;top:487px">South</div>
<div class="d" style="left:263px;top:487px">Travel</div>
<div class="d" style="left:339px;top:487px">Client_102</div>
<div class="d" style="left:415px;top:487px">3-Mar-24</div>
<div class="d" style="left:491px;top:487px">24-Feb-25</div>
<div class="d" style="left:567px;top:487px">Expired</div>
<div class="d" style="left:643px;top:487px">7057</div>
<div class="d" style="left:719px;top:487px">Percentage</div>
<div class="d" style="left:795px;top:487px">2.04%</div>
<div class="d" style="left:871px;top:487px">143.96</div>
<div class="d" style="left:947px;top:487px">Quarterly</div>
<div class="d" style="left:1023px;top:487px">0</div>
<div class="d" style="left:1099px;top:487px">0</div>
<div class="d" style="left:1175px;top:487px">1</div>
<div class="d" style="left:35px;top:503px">POL1102</div>
<div class="d" style="left:111px;top:503px">Antonio</div>
<div class="d" style="left:187px;top:503px">South</div>
<div class="d" style="left:263px;top:503px">Life</div>
<div class="d" style="left:339px;top:503px">Client_103</div>
<div class="d" style="left:415px;top:503px">16-Jan-24</div>
<div class="d" style="left:491px;top:503px">19-Mar-26</div>
<div class="d" style="left:567px;top:503px">Active</div>
<div class="d" style="left:643px;top:503px">16065</div>
<div class="d" style="left:719px;top:503px">Percentage</div>
<div class="d" style="left:795px;top:503px">4.78%</div>
<div class="d" style="left:871px;top:503px">767.91</div>
<div class="d" style="left:947px;top:503px">Monthly</div>
<div class="d" style="left:1023px;top:503px">1</div>
<div class="d" style="left:1099px;top:503px">0</div>
<div class="d" style="left:1175px;top:503px">0</div>
<div class="d" style="left:35px;top:519px">POL1103</div>
<div class="d" style="left:111px;top:519px">Sophia</div>
<div class="d" style="left:187px;top:519px">South</div>
<div class="d" style="left:263px;top:519px">Auto</div>
<div class="d" style="left:339px;top:519px">Client_104</div>
<div class="d" style="left:415px;top:519px">22-Aug-24</div>
<div class="d" style="left:491px;top:519px">2-Sep-25</div>
<div class="d" style="left:567px;top:519px">Active</div>
<div class="d" style="left:643px;top:519px">13201</div>
<div class="d" style="left:719px;top:519px">Percentage</div>
<div class="d" style="left:795px;top:519px">5.08%</div>
<div class="d" style="left:871px;top:519px">670.61</div>
<div class="d" style="left:947px;top:519px">Yearly</div>
<div class="d" style="left:1023px;top:519px">1</div>
<div class="d" style="left:1099px;top:519px">0</div>
<div class="d" style="left:1175px;top:519px">0</div>
<div class="d" style="left:35px;top:535px">POL1106</div>
<div class="d" style="left:111px;top:535px">Stephen</div>
<div class="d" style="left:187px;top:535px">South</div>
<div class="d" style="left:263px;top:535px">Auto</div>
<div class="d" style="left:339px;top:535px">Client_107</div>
<div class="d" style="left:415px;top:535px">30-Jun-25</div>
<div class="d" style="left:491px;top:535px">4-Apr-26</div>
<div class="d" style="left:567px;top:535px">Pending</div>
<div class="d" style="left:643px;top:535px">15953</div>
<div class="d" style="left:719px;top:535px">Percentage</div>
<div class="d" style="left:795px;top:535px">4.68%</div>
<div class="d" style="left:871px;top:535px">746.6</div>
<div class="d" style="left:947px;top:535px">Yearly</div>
<div class="d" style="left:1023px;top:535px">0</div>
<div class="d" style="left:1099px;top:535px">0</div>
<div class="d" style="left:1175px;top:535px">0</div>
<div class="a" style="left:945px;top:517px;width:78px;height:18px;border:2px solid #4d72b8"></div>
<div class="a" style="left:1019px;top:531px;width:7px;height:7px;border-radius:50%;background:#1d5bc6;border:1px solid #fff"></div>
<div class="a" style="left:0;top:544px;width:1280px;height:10px;background:#fff"></div>
<div class="a" style="left:0;top:544px;width:1272px;height:1px;background:#e1e1e1"></div>
<div class="hl" style="left:34px;top:544px;width:1px;height:10px"></div>
<div class="a" style="left:37px;top:545px;width:758px;height:7px;border-radius:4px;background:#dadce0"></div>
<div class="a" style="left:1273px;top:83px;width:6px;height:19px;border-radius:3px;background:#dadce0"></div>
<div class="hl" style="left:1272px;top:544px;width:1px;height:10px"></div>
<div class="hl" style="left:1251px;top:81px;width:29px;height:1px"></div>
<div class="hl" style="left:1249px;top:544px;width:1px;height:10px"></div>
<div class="hl" style="left:1261px;top:544px;width:1px;height:10px"></div>
<div class="hl" style="left:1273px;top:520px;width:7px;height:1px"></div>
<div class="hl" style="left:1273px;top:532px;width:7px;height:1px;background:#eee"></div>
<div class="hl" style="left:1273px;top:544px;width:7px;height:1px"></div>
<svg class="a" style="left:1240px;top:515px" width="40" height="39" viewBox="1240 515 40 39"><path d="M1275 527.6H1278.6L1276.8 525.4Z M1275 537.2H1278.6L1276.8 539.4Z M1256 547.2V550.8L1253.8 549Z M1266 547.2V550.8L1268.2 549Z" fill="#9a9a9a"/></svg>
</body></html>
